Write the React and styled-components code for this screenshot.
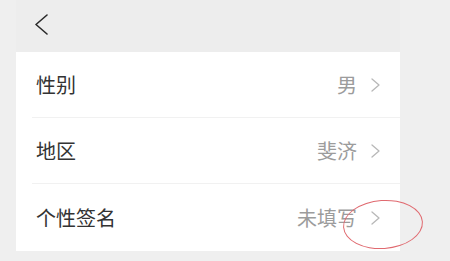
import React from 'react'
import styled, { createGlobalStyle } from 'styled-components'

const GlobalStyle = createGlobalStyle`
  html, body {
    margin: 0;
    padding: 0;
    background: #efefef;
    font-family: "Noto Sans CJK SC", "Noto Sans", sans-serif;
  }
`

const rows = [
  { label: '性别', value: '男' },
  { label: '地区', value: '斐济' },
  { label: '个性签名', value: '未填写' },
]

const Chevron = ({ dir = 'right', color, w, h, stroke }) => (
  <svg width={w} height={h} viewBox={`0 0 ${w} ${h}`} fill="none">
    {dir === 'right' ? (
      <path d={`M1 1 L${w - 1} ${h / 2} L1 ${h - 1}`} stroke={color} strokeWidth={stroke} strokeLinecap="round" strokeLinejoin="round" />
    ) : (
      <path d={`M${w - 1} 1 L1 ${h / 2} L${w - 1} ${h - 1}`} stroke={color} strokeWidth={stroke} strokeLinecap="round" strokeLinejoin="round" />
    )}
  </svg>
)

const App = () => {
  return (
    <>
      <GlobalStyle />
      <Page>
        <Column>
          <Header>
            <BackButton>
              <Chevron dir="left" color="#2a2a2a" w={13} h={21} stroke={1.6} />
            </BackButton>
          </Header>
          <Card>
            {rows.map((r, i) => (
              <Row key={r.label} last={i === rows.length - 1}>
                <Label>{r.label}</Label>
                <Right>
                  <Value>{r.value}</Value>
                  <Chevron color="#b8b8b8" w={9} h={14} stroke={1.3} />
                </Right>
              </Row>
            ))}
            <Circle />
          </Card>
        </Column>
      </Page>
    </>
  )
}

const Page = styled.div`
  width: 450px;
  height: 261px;
  background: #efefef;
  overflow: hidden;
`

const Column = styled.div`
  width: 384px;
  margin-left: 16px;
  display: flex;
  flex-direction: column;
`

const Header = styled.div`
  height: 52px;
  background: #ededed;
  display: flex;
  align-items: center;
  padding-left: 19px;
`

const BackButton = styled.div`
  display: flex;
  align-items: center;
  margin-top: -3px;
`

const Card = styled.div`
  position: relative;
  background: #ffffff;
  padding-left: 16px;
`

const Row = styled.div`
  height: ${({ last }) => (last ? '67px' : '65px')};
  display: flex;
  align-items: center;
  justify-content: space-between;
  padding-left: 4px;
  padding-right: 20px;
  border-bottom: ${({ last }) => (last ? 'none' : '1px solid #f1f1f1')};
`

const Label = styled.span`
  font-size: 20px;
  color: #333333;
`

const Right = styled.div`
  display: flex;
  align-items: center;
  gap: 14px;
`

const Value = styled.span`
  font-size: 20px;
  color: #9c9c9c;
`

const Circle = styled.div`
  position: absolute;
  left: 327px;
  top: 148px;
  width: 78px;
  height: 47px;
  border: 1px solid #e06a70;
  border-radius: 50%;
  transform: rotate(-4deg);
  pointer-events: none;
`

export default App
